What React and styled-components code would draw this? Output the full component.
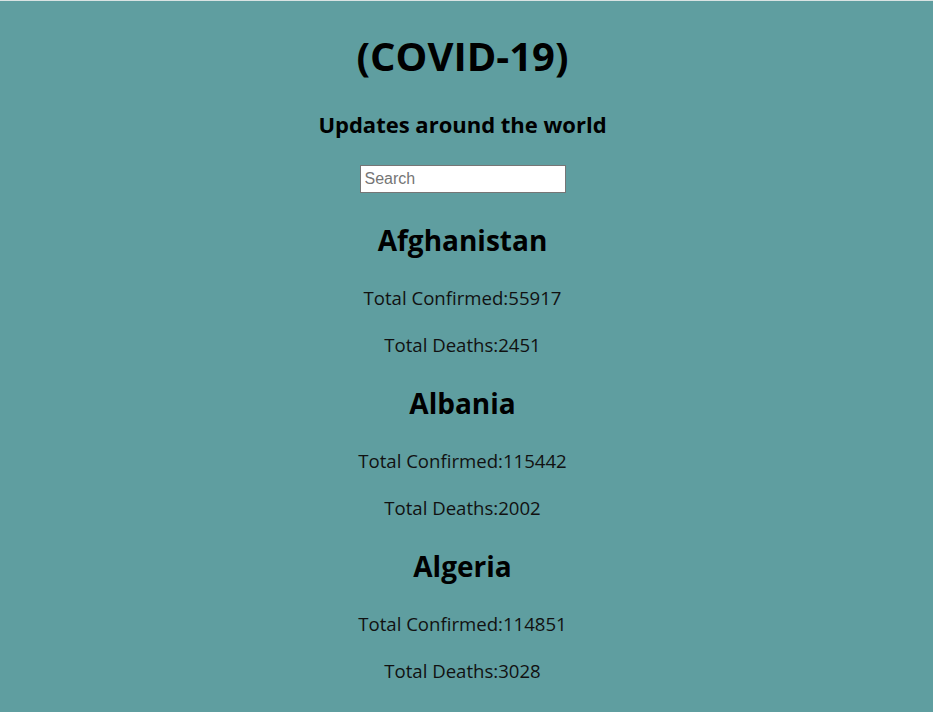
import React, { useState } from 'react';
import styled, { createGlobalStyle } from 'styled-components';

const countries = [
  { name: 'Afghanistan', confirmed: 55917, deaths: 2451 },
  { name: 'Albania', confirmed: 115442, deaths: 2002 },
  { name: 'Algeria', confirmed: 114851, deaths: 3028 },
  { name: 'Andorra', confirmed: 11089, deaths: 112 },
  { name: 'Angola', confirmed: 21380, deaths: 522 },
];

const GlobalStyle = createGlobalStyle`
  html, body {
    margin: 0;
    padding: 0;
    background: cadetblue;
  }
  body {
    font-family: 'Open Sans', 'Noto Sans', sans-serif;
    color: #000;
  }
`;

const Page = styled.div`
  display: flex;
  flex-direction: column;
  align-items: center;
  padding: 31px 8px 0 0;
  min-height: 100vh;
  background: cadetblue;
  border-top: 1px solid #d9e3e3;
  box-sizing: border-box;
`;

const Title = styled.h1`
  margin: 0;
  font-size: 40px;
  line-height: 48px;
  font-weight: 700;
`;

const Subtitle = styled.h3`
  margin: 30px 0 0;
  font-size: 22px;
  line-height: 28px;
  font-weight: 700;
`;

const Search = styled.input`
  margin-top: 27px;
  width: 206px;
  height: 28px;
  box-sizing: border-box;
  border: 1px solid #767676;
  padding: 1px 4px;
  font-family: 'Liberation Sans', Arial, sans-serif;
  font-size: 16px;
  background: #fff;
  outline: none;
  &::placeholder {
    color: #757575;
  }
`;

const List = styled.div`
  display: flex;
  flex-direction: column;
  align-items: center;
  margin-top: 30px;
`;

const Card = styled.div`
  display: flex;
  flex-direction: column;
  align-items: center;
  margin-bottom: 28px;
`;

const Name = styled.h2`
  margin: 0 0 28px;
  font-size: 28px;
  line-height: 34px;
  font-weight: 700;
`;

const Stat = styled.p`
  margin: 0;
  font-size: 18.6px;
  line-height: 26px;
  color: #111;
  & + & {
    margin-top: 21px;
  }
`;

export default function App() {
  const [query, setQuery] = useState('');
  const shown = countries.filter((c) =>
    c.name.toLowerCase().includes(query.toLowerCase())
  );

  return (
    <>
      <GlobalStyle />
      <Page>
        <Title>(COVID-19)</Title>
        <Subtitle>Updates around the world</Subtitle>
        <Search
          placeholder="Search"
          value={query}
          onChange={(e) => setQuery(e.target.value)}
        />
        <List>
          {shown.map((c) => (
            <Card key={c.name}>
              <Name>{c.name}</Name>
              <Stat>Total Confirmed:{c.confirmed}</Stat>
              <Stat>Total Deaths:{c.deaths}</Stat>
            </Card>
          ))}
        </List>
      </Page>
    </>
  );
}
